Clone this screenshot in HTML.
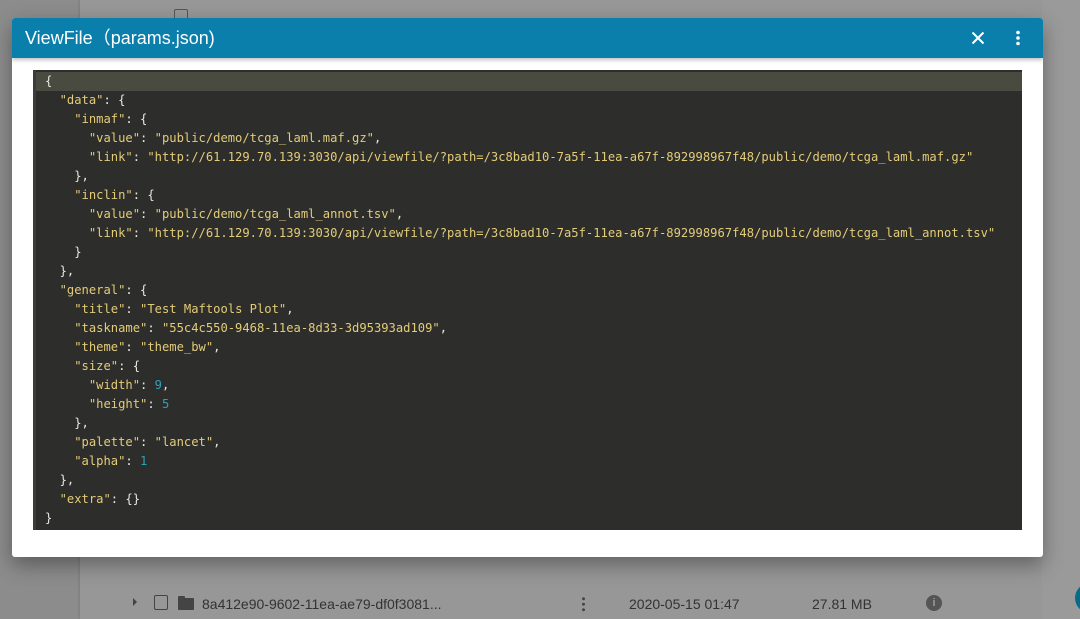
<!DOCTYPE html>
<html><head><meta charset="utf-8"><style>
html,body{margin:0;padding:0;width:1080px;height:619px;overflow:hidden;background:#8c8c8c;font-family:"Liberation Sans",sans-serif}
.card{position:absolute;left:80px;top:0;width:962px;height:619px;background:#979797;box-shadow:0 0 3px rgba(0,0,0,.2)}
.right{position:absolute;left:1042px;top:0;width:38px;height:619px;background:#9a9a9a}
.dialog{position:absolute;left:12px;top:18px;width:1031px;height:539px;background:#fff;border-radius:3px;box-shadow:0 8px 20px rgba(0,0,0,.35);overflow:hidden}
.bar{height:40px;background:#0a7fab;color:#fff;font-size:18px;line-height:40px;padding-left:13px;box-shadow:0 2px 4px rgba(0,0,0,.25);position:relative}
.code{position:absolute;left:21px;top:52px;width:989px;height:460px;background:#2d2d2b;border-left:3px solid #3c3c3a;box-sizing:border-box}
pre{margin:0;padding-top:2px;font-family:"DejaVu Sans Mono","Liberation Mono",monospace;font-size:12.15px;line-height:19px;color:#e8e8e0}
pre div{padding-left:9px;height:19px}
pre div.hl{background:#4a4b40}
.k{color:#e3cc78}.s{color:#e3cc78}.n{color:#2aa3b8}
</style></head><body>
<div class="card"></div><div class="right"></div>
<div style="position:absolute;left:174px;top:9px;width:12px;height:12px;border:1.5px solid #555;border-radius:2px"></div>
<div style="position:absolute;left:133px;top:598px;width:0;height:0;border-left:4px solid #444;border-top:4px solid transparent;border-bottom:4px solid transparent"></div>
<div style="position:absolute;left:154px;top:595px;width:12px;height:13px;border:1.5px solid #444;border-radius:2px"></div>
<div style="position:absolute;left:178px;top:598px;width:16px;height:12px;background:#444;border-radius:1px"></div>
<div style="position:absolute;left:178px;top:596px;width:7px;height:4px;background:#444;border-radius:1px"></div>
<div style="position:absolute;left:202px;top:596px;font-size:14px;color:#333">8a412e90-9602-11ea-ae79-df0f3081...</div>
<div style="position:absolute;left:582px;top:596px;width:3px;height:16px;background:radial-gradient(circle,#444 1.4px,transparent 1.6px) 0 0/3px 5.5px"></div>
<div style="position:absolute;left:629px;top:596px;font-size:14px;color:#333">2020-05-15 01:47</div>
<div style="position:absolute;left:812px;top:596px;font-size:14px;color:#333">27.81 MB</div>
<div style="position:absolute;left:926px;top:595px;width:16px;height:16px;border-radius:50%;background:#555;color:#999;font-size:11px;font-weight:bold;text-align:center;line-height:16px">i</div>
<div style="position:absolute;left:1075px;top:583px;width:30px;height:30px;border-radius:50%;background:#0a6a8a"></div>
<div class="dialog">
<div class="bar">ViewFile（params.json)
<svg style="position:absolute;left:959px;top:13px" width="14" height="14" viewBox="0 0 14 14"><path d="M1.5 1.5L12.5 12.5M12.5 1.5L1.5 12.5" stroke="#fff" stroke-width="2"/></svg>
<svg style="position:absolute;left:1004px;top:12px" width="4" height="16" viewBox="0 0 4 16"><circle cx="2" cy="2.5" r="1.8" fill="#fff"/><circle cx="2" cy="8" r="1.8" fill="#fff"/><circle cx="2" cy="13.5" r="1.8" fill="#fff"/></svg>
</div>
<div class="code"><pre><div class="hl">{</div><div>  <span class="k">"data"</span>: {</div><div>    <span class="k">"inmaf"</span>: {</div><div>      <span class="k">"value"</span>: <span class="s">"public/demo/tcga_laml.maf.gz"</span>,</div><div>      <span class="k">"link"</span>: <span class="s">"http://61.129.70.139:3030/api/viewfile/?path=/3c8bad10-7a5f-11ea-a67f-892998967f48/public/demo/tcga_laml.maf.gz"</span></div><div>    },</div><div>    <span class="k">"inclin"</span>: {</div><div>      <span class="k">"value"</span>: <span class="s">"public/demo/tcga_laml_annot.tsv"</span>,</div><div>      <span class="k">"link"</span>: <span class="s">"http://61.129.70.139:3030/api/viewfile/?path=/3c8bad10-7a5f-11ea-a67f-892998967f48/public/demo/tcga_laml_annot.tsv"</span></div><div>    }</div><div>  },</div><div>  <span class="k">"general"</span>: {</div><div>    <span class="k">"title"</span>: <span class="s">"Test Maftools Plot"</span>,</div><div>    <span class="k">"taskname"</span>: <span class="s">"55c4c550-9468-11ea-8d33-3d95393ad109"</span>,</div><div>    <span class="k">"theme"</span>: <span class="s">"theme_bw"</span>,</div><div>    <span class="k">"size"</span>: {</div><div>      <span class="k">"width"</span>: <span class="n">9</span>,</div><div>      <span class="k">"height"</span>: <span class="n">5</span></div><div>    },</div><div>    <span class="k">"palette"</span>: <span class="s">"lancet"</span>,</div><div>    <span class="k">"alpha"</span>: <span class="n">1</span></div><div>  },</div><div>  <span class="k">"extra"</span>: {}</div><div>}</div></pre></div>
</div>
</body></html>
